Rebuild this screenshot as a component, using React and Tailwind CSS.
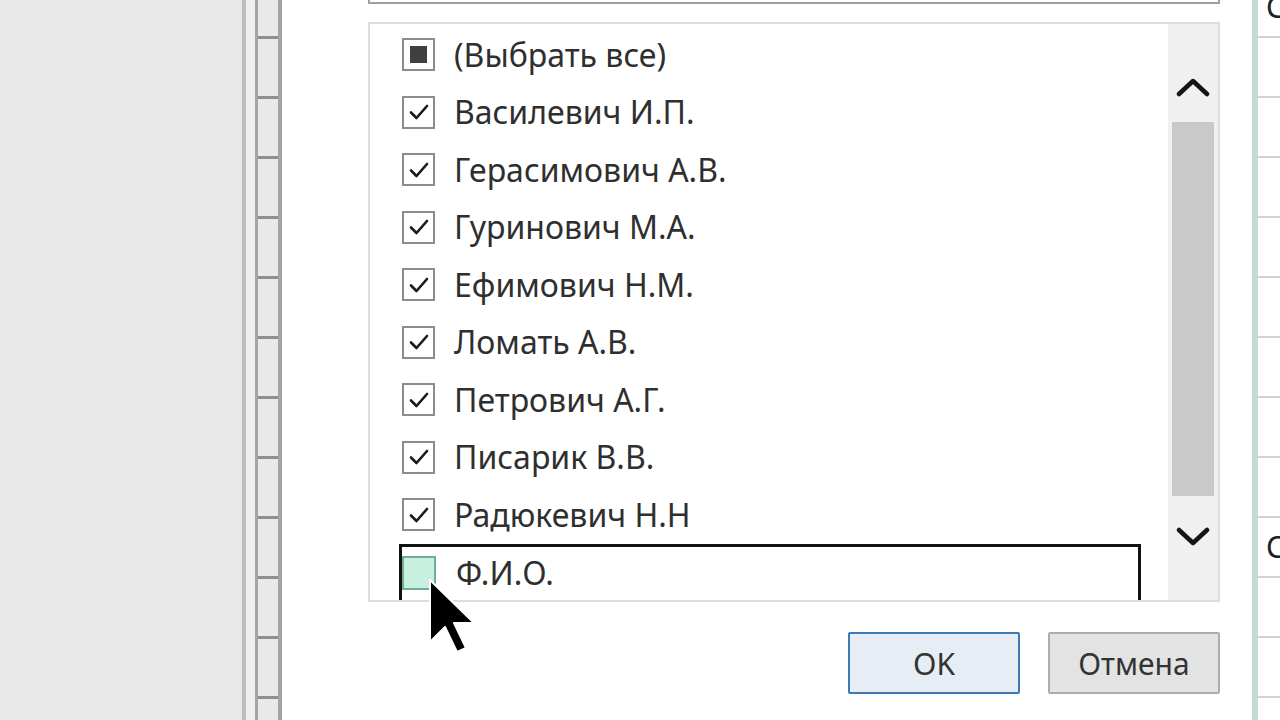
import React from 'react';

const items = [
  { label: 'Василевич И.П.', checked: true },
  { label: 'Герасимович А.В.', checked: true },
  { label: 'Гуринович М.А.', checked: true },
  { label: 'Ефимович Н.М.', checked: true },
  { label: 'Ломать А.В.', checked: true },
  { label: 'Петрович А.Г.', checked: true },
  { label: 'Писарик В.В.', checked: true },
  { label: 'Радюкевич Н.Н', checked: true },
];

function CheckBox({ state }) {
  if (state === 'hover') {
    return <div className="w-[34px] h-[34px] shrink-0 border-2 border-[#6fae94] bg-[#c9efe1]" />;
  }
  return (
    <div className="w-[33px] h-[33px] shrink-0 border-2 border-[#8c8c8c] bg-white flex items-center justify-center">
      {state === 'partial' && <div className="w-[17px] h-[17px] bg-[#3f3f3f]" />}
      {state === 'checked' && (
        <svg width="24" height="24" viewBox="0 0 24 24" fill="none">
          <path d="M4 12.5 L9.5 18 L20 6" stroke="#1a1a1a" strokeWidth="2.6" strokeLinecap="round" strokeLinejoin="round" />
        </svg>
      )}
    </div>
  );
}

function Row({ label, state, focused }) {
  return (
    <div
      className={`w-[742px] ml-[29px] flex items-center gap-[19px] border-[3px] ${
        focused ? 'h-[64px] border-[#111] items-start pt-[9px]' : 'h-[57.5px] border-transparent'
      }`}
    >
      <CheckBox state={state} />
      <span className={`text-[32px] text-[#2f2f2f] leading-none ${focused ? 'ml-[1px] mt-[1px]' : ''}`}>{label}</span>
    </div>
  );
}

function Chevron({ up }) {
  return (
    <svg width="34" height="22" viewBox="0 0 34 22" fill="none">
      <path
        d={up ? 'M3 18 L17 5 L31 18' : 'M3 4 L17 17 L31 4'}
        stroke="#151515"
        strokeWidth="4.5"
        strokeLinecap="round"
        strokeLinejoin="round"
      />
    </svg>
  );
}

function Cursor() {
  return (
    <svg className="absolute left-[428px] top-[578px]" width="50" height="80" viewBox="-2 -2 50 80">
      <path
        d="M0 0 L0 62 L15 47 L27 72 L36 68 L24 43 L44 43 Z"
        fill="#000"
        stroke="#fff"
        strokeWidth="2"
        strokeLinejoin="round"
      />
    </svg>
  );
}

export default function App() {
  const headerRows = Array.from({ length: 12 });
  const cellRows = Array.from({ length: 12 });

  return (
    <div
      className="relative w-[1280px] h-[720px] overflow-hidden flex bg-white"
      style={{ fontFamily: '"Noto Sans", "Open Sans", sans-serif' }}
    >
      {/* серая область слева */}
      <div className="w-[242px] h-full bg-[#e8e8e8] shrink-0" />
      <div className="w-[4px] h-full bg-[#bcbcbc] shrink-0" />
      <div className="w-[9px] h-full bg-[#eeeeee] shrink-0" />
      {/* заголовки строк */}
      <div className="w-[27px] h-full shrink-0 flex flex-col border-l-[3px] border-r-[4px] border-[#a3a3a3] bg-[#e9e9e9]">
        <div className="h-[39px] shrink-0 border-b-[3px] border-[#8f8f8f]" />
        {headerRows.map((_, i) => (
          <div key={i} className="h-[60px] shrink-0 border-b-[3px] border-[#8f8f8f]" />
        ))}
      </div>

      {/* диалог фильтра */}
      <div className="w-[970px] h-full shrink-0 bg-white flex flex-col">
        <div className="ml-[86px] w-[852px] h-[4px] border-x-2 border-b-2 border-[#9f9f9f]" />
        <div className="ml-[86px] mt-[18px] w-[852px] h-[580px] border-2 border-[#dcdcdc] flex overflow-hidden">
          <div className="flex-1 pt-[2px] overflow-hidden">
            <Row label="(Выбрать все)" state="partial" />
            {items.map((it) => (
              <Row key={it.label} label={it.label} state="checked" />
            ))}
            <Row label="Ф.И.О." state="hover" focused />
          </div>
          <div className="w-[50px] shrink-0 bg-[#f0f0f0] flex flex-col items-center">
            <div className="h-[98px] pt-[52px] flex justify-center">
              <Chevron up />
            </div>
            <div className="w-[42px] h-[374px] bg-[#c9c9c9]" />
            <div className="pt-[30px] flex justify-center">
              <Chevron />
            </div>
          </div>
        </div>
        <div className="mt-[30px] ml-[566px] flex gap-[28px]">
          <button className="w-[172px] h-[62px] border-2 border-[#3d7ab3] bg-[#e6edf4] text-[30px] text-[#333] rounded-[2px]">
            OK
          </button>
          <button className="w-[172px] h-[62px] border-2 border-[#adadad] bg-[#e3e3e3] text-[30px] text-[#333] rounded-[2px]">
            Отмена
          </button>
        </div>
      </div>

      {/* лист справа */}
      <div className="w-[6px] h-full bg-[#c4dbd0] shrink-0" />
      <div className="flex-1 h-full flex flex-col bg-white">
        <div className="h-[38px] shrink-0 border-b-2 border-[#d2d2d2] flex items-end pb-[14px] pl-[8px] text-[30px] text-[#222] leading-none overflow-hidden">
          С
        </div>
        {cellRows.map((_, i) => (
          <div
            key={i}
            className="h-[60px] shrink-0 border-b-2 border-[#d2d2d2] pl-[8px] flex items-center text-[30px] text-[#222] leading-none overflow-hidden"
          >
            {i === 8 ? 'С' : ''}
          </div>
        ))}
      </div>

      <Cursor />
    </div>
  );
}
